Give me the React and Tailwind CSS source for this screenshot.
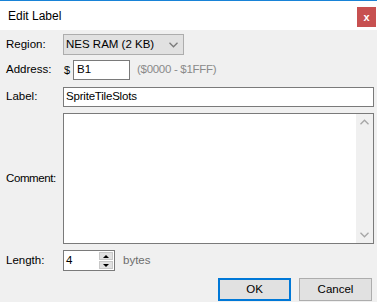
import React from "react";

const font = { fontFamily: '"Liberation Sans", Arial, sans-serif' };

const Chevron = ({ down, className }) => (
  <svg width="9" height="6" viewBox="0 0 9 6" className={className}>
    <path
      d={down ? "M0.5 0.8 L4.5 4.8 L8.5 0.8" : "M0.5 5.2 L4.5 1.2 L8.5 5.2"}
      fill="none"
      stroke="currentColor"
      strokeWidth="1.3"
    />
  </svg>
);

export default function App() {
  return (
    <div
      className="w-[377px] h-[302px] bg-[#f0f0f0] text-[11.5px] text-black overflow-hidden flex flex-col"
      style={font}
    >
      {/* Title bar */}
      <div className="h-[30px] bg-white border-t border-[#1883d7] flex items-center justify-between pl-[8px] pr-[1px]">
        <span className="text-[12px] mt-[1px]">Edit Label</span>
        <div className="w-[19px] h-[20px] bg-[#c75050] flex items-center justify-center text-white font-bold text-[11px] leading-none mt-[6px] mb-[2px] self-start">
          x
        </div>
      </div>

      <div className="flex flex-col pl-[6px] pr-[3px]">
        {/* Region */}
        <div className="flex items-center h-[21px] mt-[4px]">
          <span className="w-[57px]">Region:</span>
          <div className="w-[121px] h-[21px] bg-[#e1e1e1] border border-[#adadad] flex items-center justify-between pl-[2px] pr-[5px]">
            <span>NES RAM (2 KB)</span>
            <Chevron down className="text-[#7a7a7a]" />
          </div>
        </div>

        {/* Address */}
        <div className="flex items-center h-[20px] mt-[5px]">
          <span className="w-[57px]">Address:</span>
          <span className="w-[10px] pl-[1px] text-[11px]">$</span>
          <div className="w-[57px] h-[20px] bg-white border border-[#7a7a7a] flex items-center pl-[3px]">
            B1
          </div>
          <span className="ml-[7px] text-[#8a8a8a] tracking-[-0.3px]">($0000 - $1FFF)</span>
        </div>

        {/* Label */}
        <div className="flex items-center h-[20px] mt-[7px]">
          <span className="w-[57px]">Label:</span>
          <div className="w-[311px] h-[20px] bg-white border border-[#7a7a7a] flex items-center pl-[2px] tracking-[-0.2px]">
            SpriteTileSlots
          </div>
        </div>

        {/* Comment */}
        <div className="flex items-center h-[131px] mt-[6px]">
          <span className="w-[57px] tracking-[-0.4px]">Comment:</span>
          <div className="w-[311px] h-[131px] bg-white border border-[#7a7a7a] flex justify-end">
            <div className="w-[17px] h-full bg-[#f0f0f0] flex flex-col items-center justify-between py-[5px] text-[#a6a6a6]">
              <Chevron />
              <Chevron down />
            </div>
          </div>
        </div>

        {/* Length */}
        <div className="flex items-center h-[21px] mt-[6px]">
          <span className="w-[57px]">Length:</span>
          <div className="w-[52px] h-[21px] bg-white border border-[#7a7a7a] flex items-center justify-between pl-[2px] pr-[1px]">
            <span>4</span>
            <div className="flex flex-col w-[14px] h-[17px] gap-[1px]">
              <div className="flex-1 bg-[#e1e1e1] border border-[#c8c8c8] flex items-center justify-center">
                <div className="w-0 h-0 border-l-[3px] border-r-[3px] border-b-[3px] border-l-transparent border-r-transparent border-b-black" />
              </div>
              <div className="flex-1 bg-[#e1e1e1] border border-[#c8c8c8] flex items-center justify-center">
                <div className="w-0 h-0 border-l-[3px] border-r-[3px] border-t-[3px] border-l-transparent border-r-transparent border-t-black" />
              </div>
            </div>
          </div>
          <span className="ml-[8px] text-[#6d6d6d]">bytes</span>
        </div>

        {/* Buttons */}
        <div className="flex justify-end gap-[8px] mt-[7px] pr-[2px]">
          <button className="w-[73px] h-[23px] bg-[#e1e1e1] border-2 border-[#0078d7] flex items-center justify-center">
            OK
          </button>
          <button className="w-[73px] h-[23px] bg-[#e1e1e1] border border-[#adadad] flex items-center justify-center">
            Cancel
          </button>
        </div>
      </div>
    </div>
  );
}
